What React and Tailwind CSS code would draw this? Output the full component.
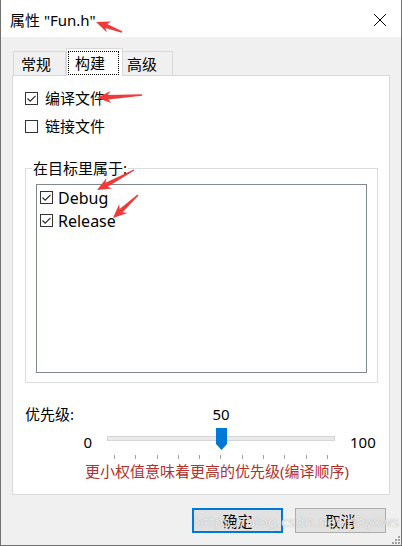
import React from "react";

const FONT = "font-['Noto_Sans','Noto_Sans_CJK_SC',sans-serif]";

function Check({ checked }) {
  return (
    <span className="w-[13px] h-[13px] border border-[#333333] bg-white flex items-center justify-center shrink-0">
      {checked && (
        <svg width="11" height="11" viewBox="0 0 11 11">
          <path d="M1.5 5.5 L4.2 8.2 L9.5 2.8" fill="none" stroke="#222" strokeWidth="1.1" />
        </svg>
      )}
    </span>
  );
}

function arrowPoints(tip, tail) {
  const dx = tail[0] - tip[0];
  const dy = tail[1] - tip[1];
  const len = Math.hypot(dx, dy);
  const ux = dx / len, uy = dy / len;
  const px = -uy, py = ux;
  const at = (d, w) => [tip[0] + ux * d + px * w, tip[1] + uy * d + py * w];
  const pts = [
    tip,
    at(14, 6),
    at(11, 2.2),
    [tail[0] + px * 0.7, tail[1] + py * 0.7],
    [tail[0] - px * 0.7, tail[1] - py * 0.7],
    at(11, -2.2),
    at(14, -6),
  ];
  return pts.map((p) => p[0].toFixed(1) + "," + p[1].toFixed(1)).join(" ");
}

const ARROWS = [
  [[95, 22], [121, 32]],
  [[96, 98], [141, 95]],
  [[96, 190], [133, 170]],
  [[112, 218], [137, 195]],
];

export default function App() {
  const ticks = Array.from({ length: 11 });
  return (
    <div className={"relative overflow-hidden w-[402px] h-[546px] bg-[#f0f0f0] border-l border-r border-b border-[#707070] flex flex-col text-[15px] text-black " + FONT}>
      {/* title bar */}
      <div className="h-[37px] bg-white flex items-center justify-between pl-[9px] pr-[14px] pt-[2px]">
        <span className="leading-[20px]">属性 "Fun.h"</span>
        <svg width="14" height="14" viewBox="0 0 14 14">
          <path d="M1 1 L13 13 M13 1 L1 13" stroke="#000" strokeWidth="1" />
        </svg>
      </div>

      <div className="flex flex-col px-[11px] pt-[11px]">
        {/* tabs */}
        <div className="flex items-end h-[27px] pl-[1px]">
          <div className="w-[53px] h-[24px] border border-b-0 border-[#d9d9d9] flex items-center pl-[7px] leading-[20px]">常规</div>
          <div className="relative z-10 w-[57px] h-[28px] -mb-px bg-white border border-b-0 border-[#d9d9d9] flex items-start pt-[2px] pl-[1px]">
            <div className="w-[51px] h-[24px] border border-dotted border-black flex items-center pl-[6px] leading-[20px]">构建</div>
          </div>
          <div className="w-[50px] h-[24px] border border-b-0 border-l-0 border-[#d9d9d9] flex items-center pl-[4px] leading-[20px]">高级</div>
        </div>

        {/* panel */}
        <div className="h-[420px] bg-white border border-[#d9d9d9] flex flex-col pl-[12px]">
          <div className="mt-[12px] h-[20px] flex items-center gap-[7px] leading-[20px]">
            <Check checked />
            <span>编译文件</span>
          </div>
          <div className="mt-[8px] h-[20px] flex items-center gap-[7px] leading-[20px]">
            <Check />
            <span>链接文件</span>
          </div>

          <fieldset className="mt-[24px] w-[353px] border border-[#dcdcdc] pb-[9px]">
            <legend className="ml-[6px] px-[1px] leading-[16px]">在目标里属于:</legend>
            <div className="mt-[8px] ml-[10px] w-[331px] h-[189px] border border-[#828790] bg-white pt-[1px] pl-[3px]">
              <div className="h-[23px] flex items-center gap-[5px] leading-[20px] text-[16px]">
                <Check checked />
                <span>Debug</span>
              </div>
              <div className="h-[23px] flex items-center gap-[5px] leading-[20px] text-[16px]">
                <Check checked />
                <span>Release</span>
              </div>
            </div>
          </fieldset>

          {/* priority */}
          <div className="mt-[21px] h-[20px] flex leading-[20px]">
            <span className="w-[82px]">优先级:</span>
            <span className="w-[228px] text-center">50</span>
          </div>
          <div className="mt-[4px] h-[22px] flex items-start">
            <span className="w-[82px] text-right pr-[15px] pt-[4px] leading-[20px]">0</span>
            <div className="relative w-[228px] h-[22px]">
              <div className="absolute left-0 right-0 top-[8px] h-[5px] bg-[#e7eaea] border border-[#d6d6d6]" />
              <svg className="absolute left-[109px] top-0" width="11" height="22" viewBox="0 0 11 22">
                <polygon points="0,0 11,0 11,16 5.5,22 0,16" fill="#0078d7" />
              </svg>
            </div>
            <span className="pl-[15px] pt-[4px] leading-[20px]">100</span>
          </div>
          <div className="mt-[5px] ml-[82px] w-[228px] h-[4px] flex justify-between px-[7px]">
            {ticks.map((_, i) => (
              <span key={i} className="w-px h-[4px] bg-[#a0a0a0]" />
            ))}
          </div>
          <div className="mt-[2px] ml-[60px] leading-[20px] text-[#b3302c] whitespace-nowrap">
            更小权值意味着更高的优先级(编译顺序)
          </div>
        </div>

        {/* buttons */}
        <div className="mt-[13px] flex justify-end gap-[12px] pr-[4px]">
          <button className="w-[91px] h-[25px] bg-[#e1e1e1] border-2 border-[#0078d7] leading-[20px]">确定</button>
          <button className="w-[91px] h-[25px] bg-[#e1e1e1] border border-[#adadad] leading-[20px]">取消</button>
        </div>
      </div>

      {/* watermark */}
      <div className="absolute left-[193px] top-[509px] text-[15px] leading-[24px] text-white/75 [text-shadow:0_0_1px_#a0a0a0] pointer-events-none whitespace-nowrap">
        https://blog.csdn.net/hbyxws
      </div>

      {/* resize grip */}
      <svg className="absolute right-[1px] bottom-[1px]" width="10" height="10" viewBox="0 0 10 10">
        <g fill="#a0a0a0">
          <rect x="8" y="2" width="2" height="2" />
          <rect x="5" y="5" width="2" height="2" />
          <rect x="8" y="5" width="2" height="2" />
          <rect x="2" y="8" width="2" height="2" />
          <rect x="5" y="8" width="2" height="2" />
          <rect x="8" y="8" width="2" height="2" />
        </g>
      </svg>

      {/* annotation arrows */}
      <svg className="absolute left-0 top-0 pointer-events-none" width="402" height="546">
        {ARROWS.map(([tip, tail], i) => (
          <polygon key={i} points={arrowPoints(tip, tail)} fill="#f03a3a" />
        ))}
      </svg>
    </div>
  );
}
